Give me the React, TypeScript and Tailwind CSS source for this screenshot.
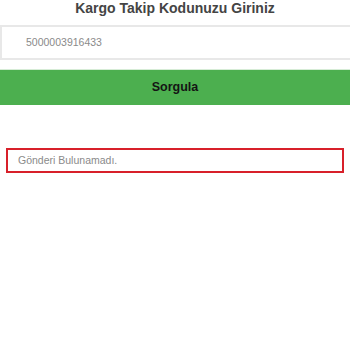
export default function App() {
  return (
    <div className="w-[350px] h-[350px] bg-white overflow-hidden" style={{ fontFamily: '"Liberation Sans", Arial, sans-serif' }}>
      <div className="-mt-[4px] h-[23px] flex items-center justify-center">
        <h1 className="text-[14px] leading-[18px] font-bold text-[#444]">Kargo Takip Kodunuzu Giriniz</h1>
      </div>
      <div className="mt-[6px] ml-0 w-[360px] h-[35px] border-[2px] border-[#e8e8e8] flex items-center pl-[24px]">
        <span className="text-[10.5px] text-[#8a8a8a]">5000003916433</span>
      </div>
      <div className="mt-[9px] h-[36px] bg-[#4caf4f] flex items-center justify-center border-t border-[#d6ecd6]">
        <span className="text-[12.5px] font-bold text-[#141414]">Sorgula</span>
      </div>
      <div className="mt-[43px] mx-[6px] h-[25px] border-[2px] border-[#d8202a] flex items-center pl-[10px]">
        <span className="text-[10.5px] text-[#8a8a8a]">Gönderi Bulunamadı.</span>
      </div>
    </div>
  );
}
